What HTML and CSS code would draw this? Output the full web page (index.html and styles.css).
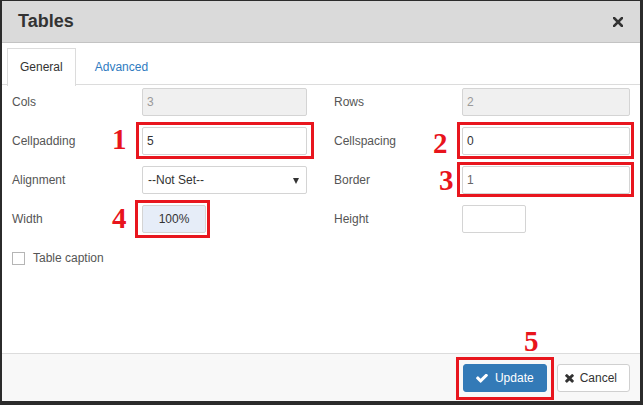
FILE: index.html
```html
<!DOCTYPE html>
<html>
<head>
<meta charset="utf-8">
<link rel="stylesheet" href="styles.css">
</head>
<body>
<div class="dialog">
  <div class="header">
    <span class="title">Tables</span>
    <svg class="close" width="10" height="10" viewBox="0 0 10 10"><path d="M1 1L9 9M9 1L1 9" stroke="#333" stroke-width="2.6" stroke-linecap="square"/></svg>
  </div>
  <div class="tabbar">
    <div class="tab active">General</div>
    <div class="tab">Advanced</div>
  </div>
  <div class="form">
    <div class="label">Cols</div>
    <div class="field disabled">3</div>
    <div></div>
    <div class="label">Rows</div>
    <div class="field disabled">2</div>

    <div class="label">Cellpadding</div>
    <div class="field">5</div>
    <div></div>
    <div class="label">Cellspacing</div>
    <div class="field">0</div>

    <div class="label">Alignment</div>
    <div class="field select">--Not Set--<span class="arrow"></span></div>
    <div></div>
    <div class="label">Border</div>
    <div class="field soft">1</div>

    <div class="label">Width</div>
    <div><div class="field small blue">100%</div></div>
    <div></div>
    <div class="label">Height</div>
    <div><div class="field small"></div></div>

    <div class="check-row"><span class="checkbox"></span><span class="label">Table caption</span></div>
  </div>
  <div class="spacer"></div>
  <div class="footer">
    <button class="btn primary"><svg width="12" height="9" viewBox="110 420 1570 1110"><path fill="#fff" d="M1671 566q0 40-28 68l-724 724-136 136q-28 28-68 28t-68-28l-136-136-362-362q-28-28-28-68t28-68l136-136q28-28 68-28t68 28l294 295 656-657q28-28 68-28t68 28l136 136q28 28 28 68z"/></svg>Update</button>
    <button class="btn"><svg width="9" height="10" viewBox="100 250 1210 1320"><path fill="#333" d="M1298 1322q0 40-28 68l-136 136q-28 28-68 28t-68-28l-294-294-294 294q-28 28-68 28t-68-28l-136-136q-28-28-28-68t28-68l294-294-294-294q-28-28-28-68t28-68l136-136q28-28 68-28t68 28l294 294 294-294q28-28 68-28t68 28l136 136q28 28 28 68t-28 68l-294 294 294 294q28 28 28 68z"/></svg>Cancel</button>
  </div>
</div>

<div class="mark box1"></div>
<div class="mark box2"></div>
<div class="mark box3"></div>
<div class="mark box4"></div>
<div class="mark box5"></div>
<span class="num n1">1</span>
<span class="num n2">2</span>
<span class="num n3">3</span>
<span class="num n4">4</span>
<span class="num n5">5</span>
</body>
</html>
```
FILE: styles.css
```css
html, body {
  margin: 0;
  height: 405px;
  overflow: hidden;
}
body {
  position: relative;
  background: #2b2b2b;
  padding: 1px 3px 0 2px;
  box-sizing: border-box;
  font-family: "Liberation Sans", Arial, sans-serif;
  font-size: 12px;
  color: #333;
}
.dialog {
  width: 638px;
  height: 400px;
  background: #fff;
  display: flex;
  flex-direction: column;
}
.header {
  height: 41px;
  background: #dadada;
  border-bottom: 1px solid #c3c3c3;
  display: flex;
  align-items: center;
  justify-content: space-between;
  padding: 0 17px 0 16px;
  flex: none;
}
.title {
  font-size: 18px;
  font-weight: bold;
  color: #333;
}
.close { display: block; margin-top: 1px; }
.tabbar {
  flex: none;
  display: flex;
  padding: 5px 0 0 5px;
  border-bottom: 1px solid #dcdcdc;
  height: 36px;
}
.tab {
  height: 36px;
  line-height: 36px;
  padding: 0 12px;
  border: 1px solid transparent;
  border-bottom: none;
  color: #2f7bbf;
  margin-right: 6px;
}
.tab.active {
  background: #fff;
  color: #333;
  border-color: #dcdcdc;
  height: 37px;
  margin-bottom: -1px;
}
.form {
  flex: none;
  display: grid;
  grid-template-columns: 130px 165px 27px 128px 168px;
  grid-auto-rows: 28px;
  row-gap: 11px;
  padding: 3px 0 0 10px;
}
.label {
  color: #555;
  align-self: center;
}
.field {
  box-sizing: border-box;
  height: 28px;
  border: 1px solid #d4d4d4;
  border-radius: 2px;
  padding: 0 4px;
  line-height: 26px;
  background: #fff;
  color: #333;
  position: relative;
}
.field.disabled {
  background: #f0f0f0;
  color: #9a9a9a;
}
.field.soft { color: #666; }
.field.select { padding-left: 5px; }
.arrow {
  position: absolute;
  right: 7px;
  top: 11px;
  border-left: 3px solid transparent;
  border-right: 3px solid transparent;
  border-top: 6px solid #333;
}
.field.small {
  width: 64px;
  text-align: center;
  padding: 0;
}
.field.blue { background: #e6edf8; }
.check-row {
  grid-column: 1 / 3;
  display: flex;
  align-items: center;
  gap: 8px;
}
.checkbox {
  width: 13px;
  height: 13px;
  box-sizing: border-box;
  border: 1px solid #b5b5b5;
  background: #fff;
  margin-left: 0;
}
.spacer { flex: 1; }
.footer {
  flex: none;
  height: 47px;
  background: #f8f8f8;
  border-top: 1px solid #dcdcdc;
  display: flex;
  justify-content: flex-end;
  align-items: flex-start;
  gap: 10px;
  padding: 10px 10px 0 0;
  box-sizing: border-box;
  height: 48px;
}
.btn {
  height: 28px;
  border: 1px solid #d0d0d0;
  border-radius: 3px;
  background: #fff;
  color: #333;
  font-family: "Liberation Sans", Arial, sans-serif;
  font-size: 12px;
  display: flex;
  align-items: center;
  gap: 6px;
  padding: 0 12px 0 7px;
  margin: 0;
}
.btn.primary {
  background: #337ab7;
  border-color: #337ab7;
  color: #fff;
  padding: 0 12px 0 12px;
  gap: 7px;
}
.mark {
  position: absolute;
  border: 3px solid #e8161e;
  box-sizing: border-box;
}
.box1 { left: 136px; top: 122px; width: 178px; height: 37px; }
.box2 { left: 457px; top: 122px; width: 177px; height: 37px; }
.box3 { left: 457px; top: 162px; width: 177px; height: 35px; }
.box4 { left: 135px; top: 200px; width: 75px; height: 38px; }
.box5 { left: 456px; top: 357px; width: 98px; height: 43px; }
.num {
  position: absolute;
  font-family: "Liberation Serif", "Times New Roman", serif;
  font-weight: bold;
  font-size: 29px;
  line-height: 29px;
  color: #e8141c;
}
.n1 { left: 112px; top: 125px; }
.n2 { left: 433px; top: 129px; }
.n3 { left: 439px; top: 166px; }
.n4 { left: 112px; top: 204px; }
.n5 { left: 524px; top: 327px; }
```
